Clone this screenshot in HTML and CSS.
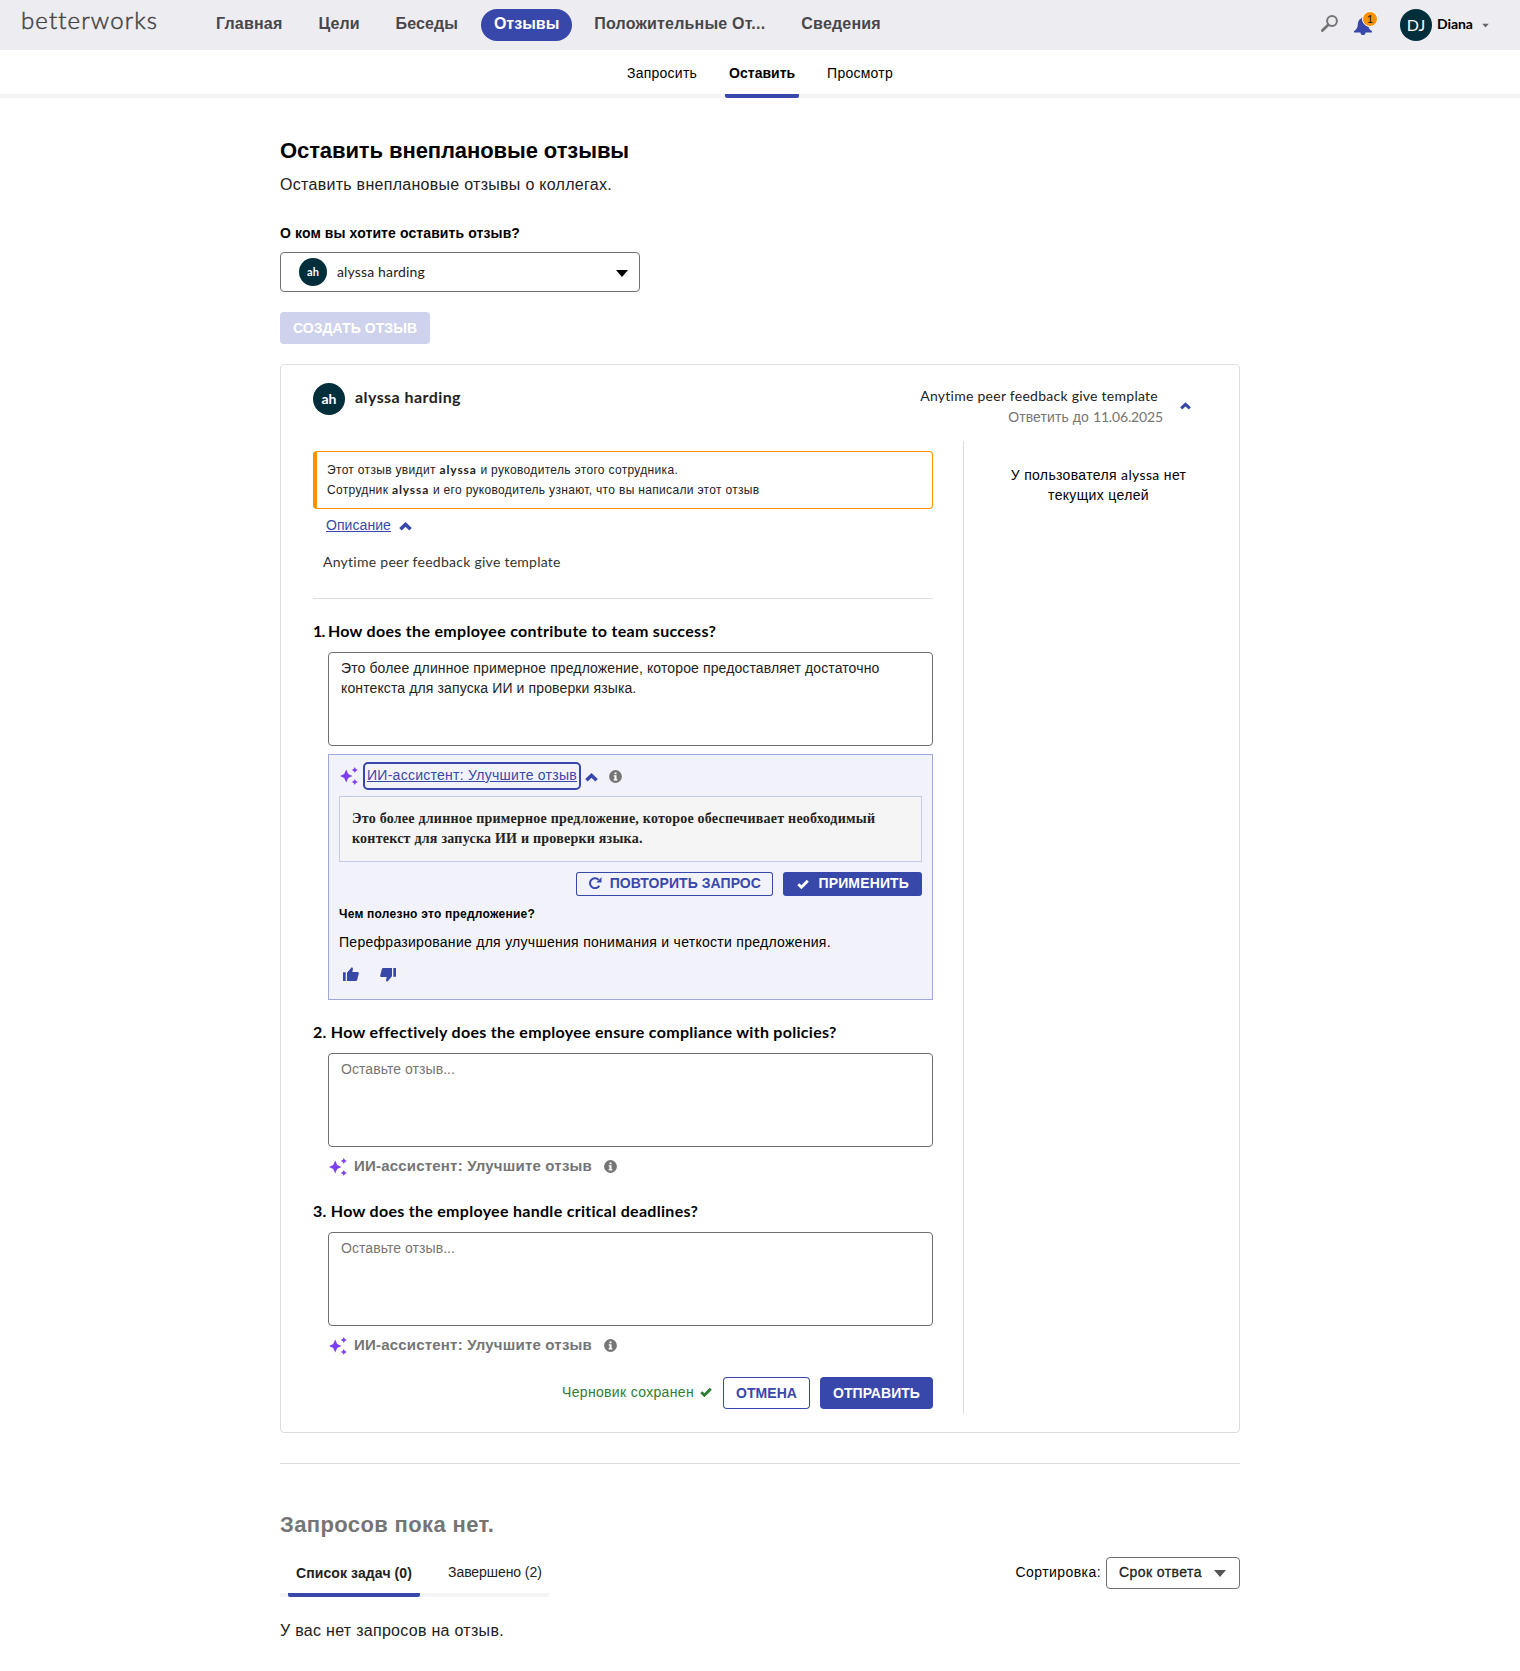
FILE: index.html
```html
<!DOCTYPE html>
<html lang="ru">
<head>
<meta charset="utf-8">
<title>Betterworks — Отзывы</title>
<link rel="stylesheet" href="styles.css">
</head>
<body>
<svg class="defs" aria-hidden="true">
  <symbol id="chevron-up" viewBox="0 0 13 9"><path d="M1.4 7.3 6.5 2.5l5.100 4.800" fill="none" stroke="currentColor" stroke-width="3.5"/></symbol>
  <symbol id="triangle" viewBox="0 0 12 7"><path d="M0 0h12L6 7z" fill="currentColor"/></symbol>
  <symbol id="sparkles" viewBox="0 0 18 18"><path d="M6.200 2.500 8.200 7 12.500 9 8.200 11 6.200 15.500 4.200 11 0 9l4.200-2zM14.800 0l1.100 2 2.100.9-2.100 1-1.100 2.100-1.100-2.100-2.100-1 2.100-.9zM14.800 12l1.100 2 2.100 1-2.100.9-1.100 2.100-1.100-2.100-2.100-.9 2.100-1z" fill="currentColor"/></symbol>
  <symbol id="info" viewBox="0 0 13 13"><circle cx="6.5" cy="6.5" r="6.4" fill="currentColor"/><path d="M5.500 2.400h2v1.800h-2zM4.700 5.200h2.800v3.900h.8v1.300H4.700V9.100h.8V6.500h-.8z" fill="#fff"/></symbol>
  <symbol id="check" viewBox="0 0 12 10"><path d="M1.300 5.200 4.400 8.200 10.800 1.700" fill="none" stroke="currentColor" stroke-width="2.9"/></symbol>
</svg>

<header class="topbar">
  <a class="logo">betterworks</a>
  <nav class="nav">
    <a class="nav-link">Главная</a>
    <a class="nav-link tight">Цели</a>
    <a class="nav-link tight">Беседы</a>
    <a class="nav-link active">Отзывы</a>
    <a class="nav-link">Положительные От...</a>
    <a class="nav-link">Сведения</a>
  </nav>
  <div class="tools">
    <svg class="search" viewBox="0 0 17 17"><circle cx="11" cy="6" r="4.9" fill="none" stroke="currentColor" stroke-width="2"/><path d="M7.300 9.700 1.400 15.600" stroke="currentColor" stroke-width="2.800" stroke-linecap="round"/></svg>
    <div class="bell">
      <svg viewBox="0 0 18 18"><path d="M9 0c1 0 1.500.6 1.500 1.500C13.200 2.300 14 4.500 14.200 7.500c.2 3.300 1.300 5.300 3.800 6.500v1.400h-6.400C11.400 17 10.400 18 9 18s-2.400-1-2.600-2.600H0V14c2.500-1.200 3.600-3.200 3.800-6.500C4 4.500 4.800 2.300 7.500 1.500 7.500.6 8 0 9 0z" fill="currentColor"/></svg>
      <span class="badge">1</span>
    </div>
    <span class="avatar avatar-dj">DJ</span>
    <span class="user">Diana</span>
    <svg class="caret" viewBox="0 0 12 7"><use href="#triangle"/></svg>
  </div>
</header>

<nav class="subnav">
  <a class="sub-link">Запросить</a>
  <a class="sub-link active">Оставить</a>
  <a class="sub-link">Просмотр</a>
</nav>

<main class="page">
  <h1 class="title">Оставить внеплановые отзывы</h1>
  <p class="lead">Оставить внеплановые отзывы о коллегах.</p>
  <label class="label">О ком вы хотите оставить отзыв?</label>
  <div class="picker">
    <span class="avatar avatar-sm">ah</span>
    <span class="picker-name">alyssa harding</span>
    <svg class="tri" viewBox="0 0 12 7"><use href="#triangle"/></svg>
  </div>
  <button class="btn btn-disabled">СОЗДАТЬ ОТЗЫВ</button>

  <section class="card">
    <header class="card-head">
      <span class="avatar">ah</span>
      <span class="card-name">alyssa harding</span>
      <div class="card-meta">
        <div class="meta-title">Anytime peer feedback give template</div>
        <div class="meta-due">Ответить до <span class="latin">11.06.2025</span></div>
      </div>
      <svg class="head-chev" viewBox="0 0 13 9"><use href="#chevron-up"/></svg>
    </header>
    <div class="card-body">
      <div class="form">
        <div class="notice">
          <div>Этот отзыв увидит <b>alyssa</b> и руководитель этого сотрудника.</div>
          <div>Сотрудник <b>alyssa</b> и его руководитель узнают, что вы написали этот отзыв</div>
        </div>
        <div class="desc-row"><a class="link">Описание</a><svg class="chev" viewBox="0 0 13 9"><use href="#chevron-up"/></svg></div>
        <p class="desc">Anytime peer feedback give template</p>

        <section class="question">
          <h3 class="q-title"><span class="q-one">1. </span>How does the employee contribute to team success?</h3>
          <div class="area">Это более длинное примерное предложение, которое предоставляет достаточно<br>контекста для запуска ИИ и проверки языка.</div>
          <div class="assist">
            <div class="assist-head">
              <svg class="sparkles" viewBox="0 0 18 18"><use href="#sparkles"/></svg>
              <a class="focus"><span class="link ai-link">ИИ-ассистент: Улучшите отзыв</span></a>
              <svg class="chev" viewBox="0 0 13 9"><use href="#chevron-up"/></svg>
              <svg class="info" viewBox="0 0 13 13"><use href="#info"/></svg>
            </div>
            <div class="suggestion">Это более длинное примерное предложение, которое обеспечивает необходимый<br>контекст для запуска ИИ и проверки языка.</div>
            <div class="assist-actions">
              <button class="btn btn-small btn-outline btn-retry"><svg class="redo" viewBox="0 0 13 12"><path d="M10.300 8.800A5 5 0 1 1 9.600 2.700" fill="none" stroke="currentColor" stroke-width="2"/><path d="M12.500.3v5.200H7.300z" fill="currentColor"/></svg>ПОВТОРИТЬ ЗАПРОС</button>
              <button class="btn btn-small btn-apply"><svg class="check" viewBox="0 0 12 10"><use href="#check"/></svg>ПРИМЕНИТЬ</button>
            </div>
            <h4 class="why">Чем полезно это предложение?</h4>
            <p class="reason">Перефразирование для улучшения понимания и четкости предложения.</p>
            <div class="votes">
              <svg class="thumb" viewBox="0 0 16 15"><path d="M0 5.300h2.700V14H0zM4 5.800 8.700.3c.9.300 1.400 1 1.200 2L9.300 5H14.500c.9 0 1.500.7 1.300 1.600l-1.600 6.200c-.2.800-.8 1.200-1.600 1.200H4z" fill="currentColor"/></svg>
              <svg class="thumb thumb-down" viewBox="0 0 16 15"><path d="M0 5.300h2.700V14H0zM4 5.800 8.700.3c.9.300 1.400 1 1.200 2L9.300 5H14.500c.9 0 1.500.7 1.300 1.600l-1.600 6.200c-.2.800-.8 1.200-1.600 1.200H4z" fill="currentColor"/></svg>
            </div>
          </div>
        </section>

        <section class="question">
          <h3 class="q-title q-wide">2. How effectively does the employee ensure compliance with policies?</h3>
          <div class="area placeholder">Оставьте отзыв...</div>
          <div class="ai-row"><svg class="sparkles" viewBox="0 0 18 18"><use href="#sparkles"/></svg><span class="ai-text">ИИ-ассистент: Улучшите отзыв</span><svg class="info" viewBox="0 0 13 13"><use href="#info"/></svg></div>
        </section>

        <section class="question">
          <h3 class="q-title q-wide">3. How does the employee handle critical deadlines?</h3>
          <div class="area placeholder">Оставьте отзыв...</div>
          <div class="ai-row"><svg class="sparkles" viewBox="0 0 18 18"><use href="#sparkles"/></svg><span class="ai-text">ИИ-ассистент: Улучшите отзыв</span><svg class="info" viewBox="0 0 13 13"><use href="#info"/></svg></div>
        </section>

        <footer class="actions">
          <span class="saved">Черновик сохранен<svg class="check" viewBox="0 0 12 10"><use href="#check"/></svg></span>
          <button class="btn btn-outline">ОТМЕНА</button>
          <button class="btn">ОТПРАВИТЬ</button>
        </footer>
      </div>
      <aside class="goals">У пользователя <span class="latin">alyssa</span> нет<br>текущих целей</aside>
    </div>
  </section>

  <hr class="rule">
  <h2 class="title muted">Запросов пока нет.</h2>
  <div class="list-bar">
    <div class="tabs">
      <a class="tab active">Список задач (0)</a>
      <a class="tab">Завершено (2)</a>
    </div>
    <div class="sort"><span class="sort-label">Сортировка:</span><span class="sort-select"><span class="sort-value">Срок ответа</span><svg class="tri" viewBox="0 0 12 7"><use href="#triangle"/></svg></span></div>
  </div>
  <p class="empty">У вас нет запросов на отзыв.</p>
</main>
</body>
</html>
```
FILE: styles.css
```css
* { box-sizing: border-box; }
body { margin: 0; background: #fff; color: #000; font-family: "Liberation Sans", Arial, sans-serif; font-size: 14px; line-height: 20px; min-height: 1671px; }
h1, h2, h3, h4, p { margin: 0; }
svg { display: block; flex: none; }
.defs { position: absolute; width: 0; height: 0; }
button { font-family: inherit; }

/* Top bar */
.topbar { height: 50px; background: #edecf1; display: flex; align-items: flex-start; padding: 9px 31px 0 21px; }
.logo { width: 181px; margin-top: -1px; font-family: Lato, sans-serif; font-weight: 300; font-size: 24px; line-height: 24px; letter-spacing: 1.12px; -webkit-text-stroke: .5px #444; color: #444; white-space: nowrap; }
.nav { display: flex; gap: 8px; }
.nav-link { height: 32px; padding: 1px 14px 0; border-radius: 16px; font-size: 16px; line-height: 28px; font-weight: 700; letter-spacing: .2px; color: #47474b; white-space: nowrap; }
.nav-link.tight { letter-spacing: .08px; }
.nav-link.active { margin-left: 1px; padding: 1px 13px 0; background: #3848aa; color: #fff; letter-spacing: 0; }
.tools { margin-left: auto; display: flex; align-items: center; height: 32px; }
.search { width: 17px; height: 17px; color: #757575; margin-right: 16px; margin-bottom: 3px; }
.bell { position: relative; width: 18px; height: 18px; color: #3848aa; margin: 2px 28px 0 0; }
.badge { position: absolute; left: 8px; top: -6px; width: 16px; height: 16px; border: 1px solid #fff; border-radius: 50%; background: #ff9100; color: #111; font: 11px/14px Lato, sans-serif; text-align: center; }
.avatar { width: 32px; height: 32px; border-radius: 50%; background: #002f3b; color: #fff; font: 700 14px/32px Lato, sans-serif; text-align: center; flex: none; }
.avatar-dj { font-weight: 400; font-size: 16px; }
.avatar-sm { width: 28px; height: 28px; font-size: 11px; line-height: 27px; }
.user { margin-left: 5px; width: 45px; font: 700 14px/32px Lato, sans-serif; letter-spacing: -.1px; padding-bottom: 2px; }
.caret { width: 7px; height: 5px; color: #666; }

/* Section tabs */
.subnav { height: 48px; border-bottom: 4px solid #f4f4f5; display: flex; justify-content: center; gap: 24px; padding-top: 13px; }
.sub-link { height: 35px; padding: 0 4px; border-bottom: 4px solid transparent; letter-spacing: .25px; }
.sub-link.active { font-weight: 700; border-color: #3848aa; border-radius: 2px; letter-spacing: 0; }

/* New feedback */
.page { width: 960px; margin: 0 auto; padding-top: 38px; }
.title { padding-top: 1px; height: 28px; font-size: 22px; line-height: 28px; font-weight: 700; letter-spacing: -.09px; }
.lead { margin-top: 9px; font-size: 16px; line-height: 24px; letter-spacing: .285px; color: #222; }
.label { display: block; margin-top: 26px; font-weight: 700; letter-spacing: .103px; }
.picker { margin-top: 9px; width: 360px; height: 40px; border: 1px solid #6f6f73; border-radius: 4px; display: flex; align-items: center; padding: 0 11px 0 18px; }
.picker-name { margin-left: 10px; font-family: Lato, sans-serif; letter-spacing: .15px; color: #222; }
.tri { width: 12px; height: 7px; margin-left: auto; }
.picker .tri { margin-top: 2px; }
.btn { height: 32px; padding: 0 13px; border: 0; border-radius: 4px; background: #3848aa; color: #fff; font-size: 14px; line-height: 20px; font-weight: 700; letter-spacing: .055px; display: flex; align-items: center; white-space: nowrap; }
.btn-outline { background: transparent; color: #3848aa; box-shadow: inset 0 0 0 1px #3848aa; }
.btn-disabled { margin-top: 20px; background: #cfd2ec; }
.btn-small { height: 24px; border-radius: 3px; padding-bottom: 2px; }
.btn-apply { padding-left: 12px; letter-spacing: .139px; }
.btn-retry { padding: 0 12.5px 2px; }

/* Feedback card */
.card { margin-top: 20px; border: 1px solid #dcdce2; border-radius: 4px; padding-bottom: 18px; }
.card-head { height: 76px; padding: 18px 48px 0 32px; display: flex; align-items: flex-start; }
.card-name { margin-left: 10px; font: 700 16px/28px Lato, sans-serif; letter-spacing: .43px; color: #222; }
.card-meta { margin-left: auto; text-align: right; }
.meta-title { font: 14px/21px Lato, sans-serif; letter-spacing: .262px; margin-right: 5px; color: #222; padding: 2px 0 1px; }
.meta-due { color: #757575; letter-spacing: .1px; }
.head-chev { width: 11px; height: 8px; color: #3848aa; margin: 19px 0 0 17px; }
.card-body { display: flex; height: 973px; }
.form { width: 683px; border-right: 1px solid #dcdce2; padding: 10px 30px 0 32px; }
.notice { height: 58px; border: 1px solid #ff9100; border-left-width: 4px; border-radius: 4px; padding: 8px 10px; font-size: 12px; letter-spacing: .325px; color: #222; white-space: nowrap; }
.notice b { font-family: Lato, sans-serif; letter-spacing: .9px; }
.link { color: #3848aa; text-decoration: underline; letter-spacing: .07px; }
.desc-row { margin-top: 6px; padding-left: 13px; display: flex; align-items: center; }
.chev { width: 13px; height: 9px; color: #3848aa; }
.desc-row .chev { margin: 3px 0 0 8px; }
.desc { margin-top: 17px; padding: 0 10px 26px; border-bottom: 1px solid #dcdce2; font-family: Lato, sans-serif; letter-spacing: .262px; color: #333; }

/* Questions */
.question { margin-top: 20px; }
.q-title { font: 700 16px/24px Lato, sans-serif; letter-spacing: .3px; white-space: nowrap; }
.q-one { letter-spacing: -.7px; }
.q-wide { letter-spacing: .29px; }
.area { margin: 9px 0 0 15px; height: 94px; border: 1px solid #6f6f73; border-radius: 4px; padding: 5px 12px; letter-spacing: .12px; color: #222; white-space: nowrap; }
.placeholder { color: #757575; letter-spacing: .06px; }
.assist { margin: 8px 0 0 15px; height: 246px; border: 1px solid #9fa8da; background: #f2f3fa; padding: 7px 10px 0; }
.assist-head { height: 28px; display: flex; align-items: center; }
.sparkles { width: 18px; height: 18px; color: #7e3ff2; }
.assist-head .sparkles { margin-left: 1px; }
.assist-head .chev { margin-top: 3px; }
.focus { margin: 0 4px 0 5px; width: 218px; height: 28px; border: 2px solid #3848aa; border-radius: 5px; padding: 1px 2px 0; white-space: nowrap; }
.ai-link { letter-spacing: .265px; }
.info { width: 13px; height: 13px; color: #757575; }
.assist-head .info { margin-left: 11px; }
.suggestion { margin-top: 6px; height: 66px; border: 1px solid #c5cae9; background: #f5f5f5; padding: 12px; font-family: "Liberation Serif", serif; font-weight: 700; letter-spacing: .235px; color: #222; white-space: nowrap; }
.assist-actions { margin-top: 10px; display: flex; justify-content: flex-end; gap: 10px; }
.redo { width: 13px; height: 12px; margin-right: 8px; }
.check { width: 12px; height: 10px; }
.btn .check { margin: 2px 9px 0 2px; }
.why { margin-top: 8px; font-size: 12px; letter-spacing: .233px; }
.reason { margin-top: 8px; letter-spacing: .28px; }
.votes { margin: 15px 0 0 4px; display: flex; gap: 21px; color: #3848aa; }
.thumb { width: 16px; height: 15px; }
.thumb-down { transform: rotate(180deg); }
.ai-row { margin: 8px 0 0 16px; height: 24px; display: flex; align-items: center; color: #757575; }
.ai-row .info { margin-bottom: 1px; }
.ai-text { margin: 0 12px 0 7px; padding-bottom: 2px; font-size: 15px; font-weight: 700; letter-spacing: .2px; }
.actions { margin-top: 19px; display: flex; justify-content: flex-end; gap: 10px; }
.saved { display: flex; align-items: center; gap: 6px; margin-right: 1px; padding-bottom: 2px; color: #2e7d32; letter-spacing: .335px; }
.goals { flex: 1; padding: 24px 52px 0 46px; text-align: center; letter-spacing: .34px; white-space: nowrap; }
.latin { font-family: Lato, sans-serif; }
.meta-due .latin { letter-spacing: -.15px; }

/* Requests */
.rule { margin: 30px 0 46px; border: 0; height: 1px; background: #dcdce2; }
.muted { color: #757575; letter-spacing: .38px; }
.list-bar { margin-top: 19px; height: 40px; display: flex; justify-content: space-between; }
.tabs { width: 269px; padding-left: 8px; border-bottom: 4px solid #f4f4f7; border-radius: 2px; display: flex; gap: 20px; }
.tab { height: 40px; padding: 5px 8px 0; border-bottom: 4px solid transparent; letter-spacing: -.07px; color: #222; white-space: nowrap; }
.tab.active { border-color: #3848aa; border-radius: 2px; font-weight: 700; padding-top: 6px; letter-spacing: .1px; }
.sort { display: flex; height: 32px; }
.sort-label { margin: 5px 5px 0 0; letter-spacing: .43px; }
.sort-select { width: 134px; border: 1px solid #6f6f73; border-radius: 4px; padding: 4px 13px 0 12px; display: flex; color: #222; }
.sort-value { -webkit-text-stroke: .3px; letter-spacing: .43px; }
.sort-select .tri { margin-top: 8px; color: #555; }
.empty { margin-top: 22px; font-size: 16px; line-height: 24px; letter-spacing: .29px; color: #222; }
```
